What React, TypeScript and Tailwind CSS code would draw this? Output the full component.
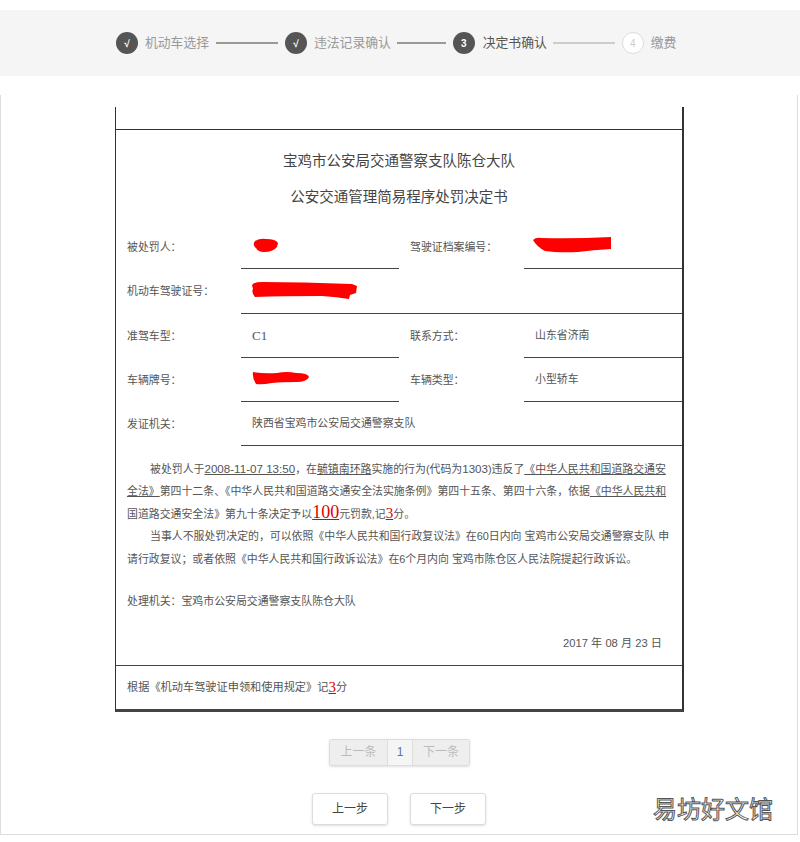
import React from 'react';

const cjk = "font-['Liberation_Sans','Noto_Sans_CJK_SC',sans-serif]";

const Step: React.FC<{ mark: string; label: string; state: 'done' | 'now' | 'todo'; labelClass: string }> = ({ mark, label, state, labelClass }) => (
  <div className="flex items-center">
    <span
      className={
        state === 'todo'
          ? 'flex h-[22px] w-[22px] items-center justify-center rounded-full border border-[#ddd] bg-white text-[10px] text-[#ccc]'
          : 'flex h-[22px] w-[22px] items-center justify-center rounded-full bg-[#555] text-[10px] font-bold text-white'
      }
    >
      {mark}
    </span>
    <span className={`text-[12.8px] ${labelClass}`}>{label}</span>
  </div>
);

const Scribble: React.FC<{ w: number; h: number; d: string; className?: string }> = ({ w, h, d, className }) => (
  <svg width={w} height={h} viewBox={`0 0 ${w} ${h}`} className={className}>
    <path d={d} fill="#f00" />
  </svg>
);

const Label: React.FC<{ children: React.ReactNode }> = ({ children }) => (
  <div className="flex h-[44px] items-center pl-[11px] text-[10.9px] text-[#555]">{children}</div>
);

const Value: React.FC<{ children?: React.ReactNode }> = ({ children }) => (
  <div className="flex h-[44px] items-center border-b border-[#444] pl-[11px] text-[10.9px] text-[#555]">{children}</div>
);

export default function App() {
  return (
    <div className={`h-[842px] w-[800px] overflow-hidden bg-white pt-[10px] ${cjk}`}>
      <div className="flex h-[66px] items-center bg-[#f5f5f5] pl-[116px]">
        <Step mark="√" label="机动车选择" state="done" labelClass="ml-[7px] text-[#999]" />
        <div className="ml-[7px] h-[2px] w-[62px] bg-[#999]" />
        <div className="ml-[7px]">
          <Step mark="√" label="违法记录确认" state="done" labelClass="ml-[7px] text-[#999]" />
        </div>
        <div className="ml-[6px] h-[2px] w-[49px] bg-[#999]" />
        <div className="ml-[7px]">
          <Step mark="3" label="决定书确认" state="now" labelClass="ml-[8px] text-[#555]" />
        </div>
        <div className="ml-[6px] h-[2px] w-[62px] bg-[#ccc]" />
        <div className="ml-[7px]">
          <Step mark="4" label="缴费" state="todo" labelClass="ml-[7px] text-[#999]" />
        </div>
      </div>

      <div className="mt-[19px] h-[740px] w-[798px] border-x border-b border-[#ddd] pl-[114px] pt-[12px]">
        <div className="w-[569px] border-x border-b-[3px] border-l-[#333] border-r-2 border-r-[#333] border-b-[#444]">
          <div className="h-[23px] border-b border-[#333]" />
          <div className="pt-[13px] text-center text-[14.5px] leading-[36px] text-[#444]">
            <div>宝鸡市公安局交通警察支队陈仓大队</div>
            <div>公安交通管理简易程序处罚决定书</div>
          </div>

          <div className="mt-[10px] grid grid-cols-[125px_158px_125px_158px]">
            <Label>被处罚人：</Label>
            <Value>
              <Scribble w={26} h={14} className="mb-[4px]" d="M3 3 Q8 0 14 1 Q24 1 26 5 L25 9 Q21 14 12 14 Q6 14 4 10 Q0 7 3 3Z" />
            </Value>
            <Label>驾驶证档案编号：</Label>
            <Value>
              <Scribble w={78} h={16} className="mb-[4px] -ml-[2px]" d="M0 3 Q3 0 8 1 Q40 2 78 0 L78 12 Q60 13 45 15 Q25 16 12 14 Q4 10 0 3Z" />
            </Value>
            <Label>机动车驾驶证号：</Label>
            <div className="col-span-3 flex h-[45px] items-center border-b border-[#444] pl-[11px]">
              <Scribble w={105} h={17} className="mb-[2px]" d="M0 3 Q2 0 10 0 Q50 0 100 2 L105 4 L104 11 L98 13 L97 17 Q85 15 70 14 Q30 14 3 15 Q-1 10 1 7Z" />
            </div>
            <Label>准驾车型：</Label>
            <Value>
              <span className="font-['Liberation_Serif'] text-[13px]">C1</span>
            </Value>
            <Label>联系方式：</Label>
            <Value>山东省济南</Value>
            <Label>车辆牌号：</Label>
            <Value>
              <Scribble w={57} h={13} className="mb-[2px]" d="M1 0 Q12 2 25 1 Q35 -1 44 1 Q56 1 57 5 Q55 10 44 10 Q30 10 20 11 Q10 13 4 12 Q0 6 1 0Z" />
            </Value>
            <Label>车辆类型：</Label>
            <Value>小型轿车</Value>
            <Label>发证机关：</Label>
            <div className="col-span-3 flex h-[44px] items-center border-b border-[#444] pl-[11px] text-[10.9px] text-[#555]">
              陕西省宝鸡市公安局交通警察支队
            </div>
          </div>

          <div className="pl-[11px] pr-[6px] pt-[12px] text-[10.9px] leading-[22.4px] text-[#555]">
            <p className="indent-[23px]">
              被处罚人于<span className="text-[11.6px] underline">2008-11-07 13:50</span>，在<span className="underline">毓镇南环路</span>实施的行为(代码为<span className="text-[11.6px]">1303</span>)违反了<span className="underline">《中华人民共和国道路交通安</span>
              <br />
              <span className="underline">全法》</span>第四十二条、《中华人民共和国道路交通安全法实施条例》第四十五条、第四十六条，依据<span className="underline">《中华人民共和</span>
              <br />
              国道路交通安全法》第九十条决定予以<span className="font-['Liberation_Serif'] text-[18px] leading-[1] text-[#d00] underline">100</span>元罚款,记<span className="font-['Liberation_Serif'] text-[15px] leading-[1] text-[#d00] underline">3</span>分。
            </p>
            <p className="indent-[23px]">
              当事人不服处罚决定的，可以依照《中华人民共和国行政复议法》在60日内向 宝鸡市公安局交通警察支队 申
              <br />
              请行政复议；或者依照《中华人民共和国行政诉讼法》在6个月内向 宝鸡市陈仓区人民法院提起行政诉讼。
            </p>
            <p className="mt-[20px]">处理机关：宝鸡市公安局交通警察支队陈仓大队</p>
            <p className="mt-[20px] pr-[14px] text-right text-[11.2px]">2017 年 08 月 23 日</p>
          </div>

          <div className="mt-[10px] flex h-[44px] items-center border-t border-[#444] pl-[11px] text-[11.2px] text-[#555]">
            根据《机动车驾驶证申领和使用规定》记<span className="font-['Liberation_Serif'] text-[15px] leading-[1] text-[#d00] underline">3</span>分
          </div>
        </div>

        <div className="ml-[214px] mt-[27px] flex h-[27px] w-[141px] items-center rounded-[2px] border border-[#ddd] text-[12px] shadow-sm">
          <div className="flex h-full w-[57px] items-center justify-center bg-[#eee] text-[#bbb]">上一条</div>
          <div className="flex h-full w-[26px] items-center justify-center border-x border-[#ddd] bg-[#f5f5f5] text-[#5b6fb0]">1</div>
          <div className="flex h-full flex-1 items-center justify-center bg-[#eee] text-[#bbb]">下一条</div>
        </div>

        <div className="ml-[197px] mt-[27px] flex gap-[22px]">
          <button className="h-[32px] w-[76px] rounded-[3px] border border-[#ddd] bg-white text-[12px] text-[#444] shadow-sm">上一步</button>
          <button className="h-[32px] w-[76px] rounded-[3px] border border-[#ddd] bg-white text-[12px] text-[#444] shadow-sm">下一步</button>
        </div>
      </div>

      <div className="absolute left-[653px] top-[796px] text-[24px] leading-[28px] text-white [-webkit-text-stroke:1px_#555]">易坊好文馆</div>
    </div>
  );
}
